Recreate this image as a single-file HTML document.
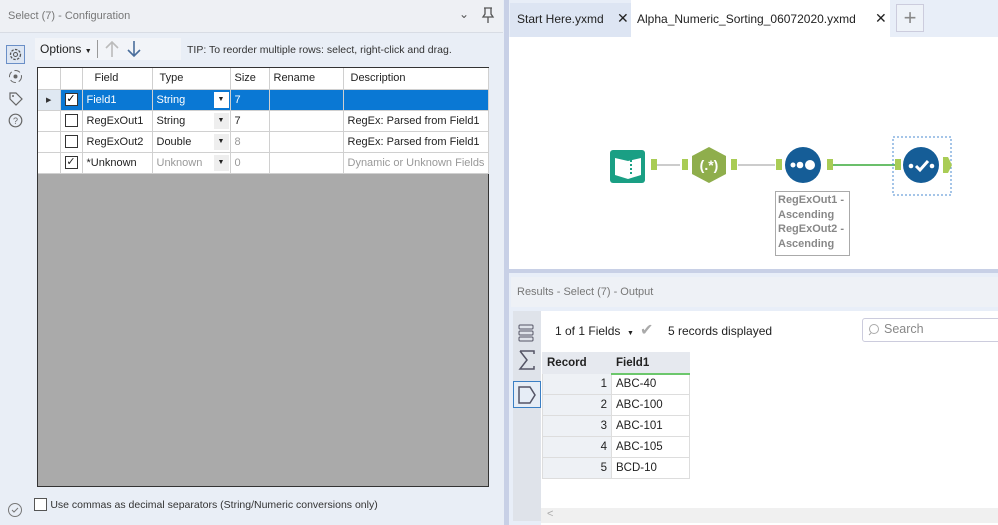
<!DOCTYPE html>
<html><head><style>
*{box-sizing:border-box;margin:0;padding:0}
body{width:998px;height:525px;overflow:hidden;background:#e9eef6;font-family:"Liberation Sans",sans-serif;font-size:12px;color:#222;position:relative}
.abs{position:absolute}
.grid td{border-right:1px solid #d0d0d0;border-bottom:1px solid #d0d0d0;height:21px;padding:0 4px;white-space:nowrap;overflow:hidden;font-size:11px;position:relative;vertical-align:middle}
.grid{border-collapse:collapse;table-layout:fixed;background:#fff}
.cb{display:inline-block;width:13px;height:13px;border:1px solid #333;background:#fff;vertical-align:middle;text-align:center;line-height:11px;font-size:11px}
.sel td{background:#0a78d4;color:#fff}
.dd{position:absolute;right:1px;top:2px;width:15px;height:16px;background:#eee;color:#222;text-align:center;font-size:7px;line-height:16px}
.r td{border:1px solid #ddd;height:21px;font-size:11.5px;padding:0 4px}
</style></head><body>
<div class="abs" style="left:0;top:0;width:503px;height:33px;background:#eef0f4;border-bottom:1px solid #d8dce4"></div>
<div class="abs" style="left:8px;top:10px;color:#777;font-size:11px">Select (7) - Configuration</div>
<div class="abs" style="left:459px;top:7px;color:#555;font-size:12px">&#8964;</div>
<svg class="abs" style="left:481px;top:7px" width="14" height="16"><path d="M3 1h8M4 1v6l-2 3h10l-2-3V1M7 10v6" stroke="#555" fill="none" stroke-width="1.3"/></svg>
<div class="abs" style="left:6px;top:45px;width:19px;height:19px;border:1px solid #6a8fc7;background:#dde6f3"></div>
<svg class="abs" style="left:8px;top:47px" width="15" height="15"><circle cx="7.5" cy="7.5" r="5" stroke="#555" fill="none" stroke-width="1.3" stroke-dasharray="2.5 1.3"/><circle cx="7.5" cy="7.5" r="2" stroke="#555" fill="none"/></svg>
<svg class="abs" style="left:8px;top:69px" width="15" height="15"><circle cx="7.5" cy="7.5" r="6" stroke="#666" fill="none" stroke-dasharray="6 3"/><circle cx="7.5" cy="7.5" r="2" fill="#666"/></svg>
<svg class="abs" style="left:8px;top:91px" width="15" height="15"><path d="M2 2h6l6 6-6 6-6-6z" stroke="#666" fill="none" stroke-width="1.2"/><circle cx="5" cy="5" r="1" fill="#666"/></svg>
<svg class="abs" style="left:8px;top:113px" width="15" height="15"><circle cx="7.5" cy="7.5" r="6.3" stroke="#666" fill="none" stroke-width="1.2"/><text x="7.5" y="11" font-size="9" text-anchor="middle" fill="#666" font-family="Liberation Sans">?</text></svg>
<svg class="abs" style="left:7px;top:502px" width="16" height="16"><circle cx="8" cy="8" r="6.5" stroke="#777" fill="none"/><path d="M5 8l2 2 4-4" stroke="#777" fill="none"/></svg>
<div class="abs" style="left:35px;top:38px;width:146px;height:22px;background:#f2f4f8"></div>
<div class="abs" style="left:40px;top:42px;font-size:12px">Options <span style="font-size:7px">&#9660;</span></div>
<div class="abs" style="left:97px;top:40px;width:1px;height:18px;background:#999"></div>
<svg class="abs" style="left:103px;top:40px" width="40" height="18"><path d="M9 17V2M3 8l6-6 6 6" stroke="#bbb" fill="none" stroke-width="1.6"/><path d="M31 1v15M25 10l6 6 6-6" stroke="#4a6e9c" fill="none" stroke-width="1.6"/></svg>
<div class="abs" style="left:187px;top:44px;font-size:10.5px;color:#333">TIP: To reorder multiple rows: select, right-click and drag.</div>
<div class="abs" style="left:37px;top:67px;width:452px;height:420px;background:#aaa;border:1px solid #333"></div>
<table class="grid abs" style="left:38px;top:68px;width:450px">
<colgroup><col style="width:22px"><col style="width:22px"><col style="width:70px"><col style="width:78px"><col style="width:39px"><col style="width:74px"><col style="width:145px"></colgroup>
<tr><td></td><td></td><td style="padding-left:12px">Field</td><td style="padding-left:7px">Type</td><td>Size</td><td>Rename</td><td style="padding-left:7px">Description</td></tr>
<tr class="sel"><td style="background:#dfe8f2;color:#333;font-size:7px;text-align:center">&#9654;</td><td><span class="cb" style="color:#000">&#10003;</span></td><td>Field1</td><td>String<span class="dd" style="background:#fff">&#9660;</span></td><td>7</td><td></td><td></td></tr>
<tr><td></td><td><span class="cb"></span></td><td>RegExOut1</td><td>String<span class="dd">&#9660;</span></td><td>7</td><td></td><td>RegEx: Parsed from Field1</td></tr>
<tr><td></td><td><span class="cb"></span></td><td>RegExOut2</td><td>Double<span class="dd">&#9660;</span></td><td style="color:#999">8</td><td></td><td>RegEx: Parsed from Field1</td></tr>
<tr><td></td><td><span class="cb">&#10003;</span></td><td>*Unknown</td><td style="color:#999">Unknown<span class="dd">&#9660;</span></td><td style="color:#999">0</td><td></td><td style="color:#999">Dynamic or Unknown Fields</td></tr>
</table>
<div class="abs" style="left:34px;top:497px"><span class="cb" style="border-color:#555"></span> <span style="font-size:10.5px;color:#333">Use commas as decimal separators (String/Numeric conversions only)</span></div>
<div class="abs" style="left:504px;top:0;width:5px;height:525px;background:#c8d0e6"></div>
<div class="abs" style="left:509px;top:0;width:489px;height:37px;background:#e8eef8"></div>
<div class="abs" style="left:510px;top:3px;width:121px;height:34px;background:#dde5f3"></div>
<div class="abs" style="left:517px;top:12px;font-size:12px">Start Here.yxmd</div>
<div class="abs" style="left:617px;top:10px;font-size:14px">&#10005;</div>
<div class="abs" style="left:631px;top:0;width:259px;height:37px;background:#fff"></div>
<div class="abs" style="left:637px;top:12px;font-size:12px">Alpha_Numeric_Sorting_06072020.yxmd</div>
<div class="abs" style="left:875px;top:10px;font-size:14px">&#10005;</div>
<div class="abs" style="left:896px;top:4px;width:28px;height:28px;border:1px solid #ccd;background:#eef2f8;text-align:center;font-size:22px;line-height:25px;color:#888">+</div>
<div class="abs" style="left:509px;top:37px;width:489px;height:232px;background:#fff"></div>
<div class="abs" style="left:509px;top:269px;width:489px;height:4px;background:#c8d0e6"></div>
<svg class="abs" style="left:600px;top:130px" width="360" height="70">
<line x1="56" y1="35" x2="80" y2="35" stroke="#999"/>
<line x1="138" y1="35" x2="175" y2="35" stroke="#999"/>
<line x1="230" y1="35" x2="296" y2="35" stroke="#3aaa3a" stroke-width="1.5"/>
<rect x="10" y="20" width="35" height="33" rx="3" fill="#1a9f84"/>
<path d="M15 28l13 3 0 18-13-4z M41 28l-13 3 0 18 13-4z" fill="#fff"/><path d="M31 30v16" stroke="#1a9f84" stroke-width="2" stroke-dasharray="2 2"/>
<rect x="51" y="29" width="6" height="11" fill="#a9cc55"/>
<rect x="82" y="29" width="6" height="11" fill="#a9cc55"/>
<polygon points="109,17 126,26 126,44 109,53 92,44 92,26" fill="#8fae4c"/>
<text x="109" y="40" fill="#fff" font-size="14" font-weight="bold" text-anchor="middle" font-family="Liberation Sans">(.*)</text>
<rect x="131" y="29" width="6" height="11" fill="#a9cc55"/>
<rect x="176" y="29" width="6" height="11" fill="#a9cc55"/>
<circle cx="203" cy="35" r="18" fill="#155d97"/>
<circle cx="193" cy="35" r="2.5" fill="#fff"/><circle cx="200" cy="35" r="3.3" fill="#fff"/><circle cx="210" cy="35" r="5" fill="#fff"/>
<rect x="227" y="29" width="6" height="11" fill="#a9cc55"/>
<rect x="293" y="7" width="58" height="58" fill="none" stroke="#4b8bd0" stroke-dasharray="2 2"/>
<rect x="295" y="29" width="6" height="11" fill="#a9cc55"/>
<circle cx="321" cy="35" r="18" fill="#155d97"/>
<circle cx="311" cy="36" r="2.3" fill="#fff"/><path d="M316 36l4 4 8-9" stroke="#fff" stroke-width="3" fill="none"/><circle cx="332" cy="36" r="2.3" fill="#fff"/>
<path d="M343 27h5l4 8-4 8h-5z" fill="#a9cc55"/>
</svg>
<div class="abs" style="left:775px;top:191px;width:75px;height:65px;border:1px solid #aaa;background:#fff;color:#888;font-size:11px;font-weight:bold;line-height:14.5px;padding:1px 2px">RegExOut1 -<br>Ascending<br>RegExOut2 -<br>Ascending</div>
<div class="abs" style="left:509px;top:273px;width:489px;height:252px;background:#e8eef8"></div>
<div class="abs" style="left:511px;top:277px;width:487px;height:30px;background:#eef1f6"></div>
<div class="abs" style="left:517px;top:286px;font-size:11px;color:#777">Results - Select (7) - Output</div>
<div class="abs" style="left:513px;top:311px;width:28px;height:210px;background:#dfe3ea"></div>
<div class="abs" style="left:541px;top:311px;width:457px;height:214px;background:#fff"></div>
<svg class="abs" style="left:517px;top:323px" width="20" height="20"><rect x="2" y="2" width="14" height="4" rx="1" fill="none" stroke="#556"/><rect x="2" y="8" width="14" height="4" rx="1" fill="none" stroke="#556"/><rect x="2" y="14" width="14" height="4" rx="1" fill="none" stroke="#556"/></svg>
<svg class="abs" style="left:517px;top:350px" width="20" height="20"><path d="M3 1h14v3M3 1l7 9-7 9h14v-3" stroke="#556" fill="none" stroke-width="1.5"/></svg>
<div class="abs" style="left:513px;top:381px;width:28px;height:27px;border:1px solid #3b7fc4;background:#e6edf6"></div>
<svg class="abs" style="left:517px;top:385px" width="20" height="20"><path d="M2 2h11l5 8-5 8H2z" stroke="#556" fill="none" stroke-width="1.5"/></svg>
<div class="abs" style="left:555px;top:324px;font-size:12px">1 of 1 Fields &nbsp;<span style="font-size:7px">&#9660;</span></div>
<div class="abs" style="left:640px;top:320px;font-size:16px;color:#aaa">&#10004;</div>
<div class="abs" style="left:668px;top:324px;font-size:12px">5 records displayed</div>
<div class="abs" style="left:862px;top:318px;width:140px;height:24px;border:1px solid #ccd;border-radius:3px;background:#fff"></div>
<svg class="abs" style="left:867px;top:323px" width="14" height="14"><circle cx="7" cy="6" r="4.5" stroke="#aaa" fill="none"/><path d="M2 12l2-2" stroke="#aaa"/></svg>
<div class="abs" style="left:884px;top:322px;font-size:12.5px;color:#888">Search</div>
<table class="r abs" style="left:542px;top:352px;border-collapse:collapse;width:148px">
<tr><td style="width:69px;background:#e6e9ef;font-weight:bold;border-color:#e6e9ef">Record</td><td style="background:#e6e9ef;font-weight:bold;border-color:#e6e9ef;border-bottom:2px solid #6cc76c">Field1</td></tr>
<tr><td style="background:#eef1f5;text-align:right">1</td><td>ABC-40</td></tr>
<tr><td style="background:#eef1f5;text-align:right">2</td><td>ABC-100</td></tr>
<tr><td style="background:#eef1f5;text-align:right">3</td><td>ABC-101</td></tr>
<tr><td style="background:#eef1f5;text-align:right">4</td><td>ABC-105</td></tr>
<tr><td style="background:#eef1f5;text-align:right">5</td><td>BCD-10</td></tr>
</table>
<div class="abs" style="left:541px;top:508px;width:457px;height:15px;background:#f0f0f0;color:#aaa;font-size:11px;padding-left:6px">&lt;</div>
</body></html>
